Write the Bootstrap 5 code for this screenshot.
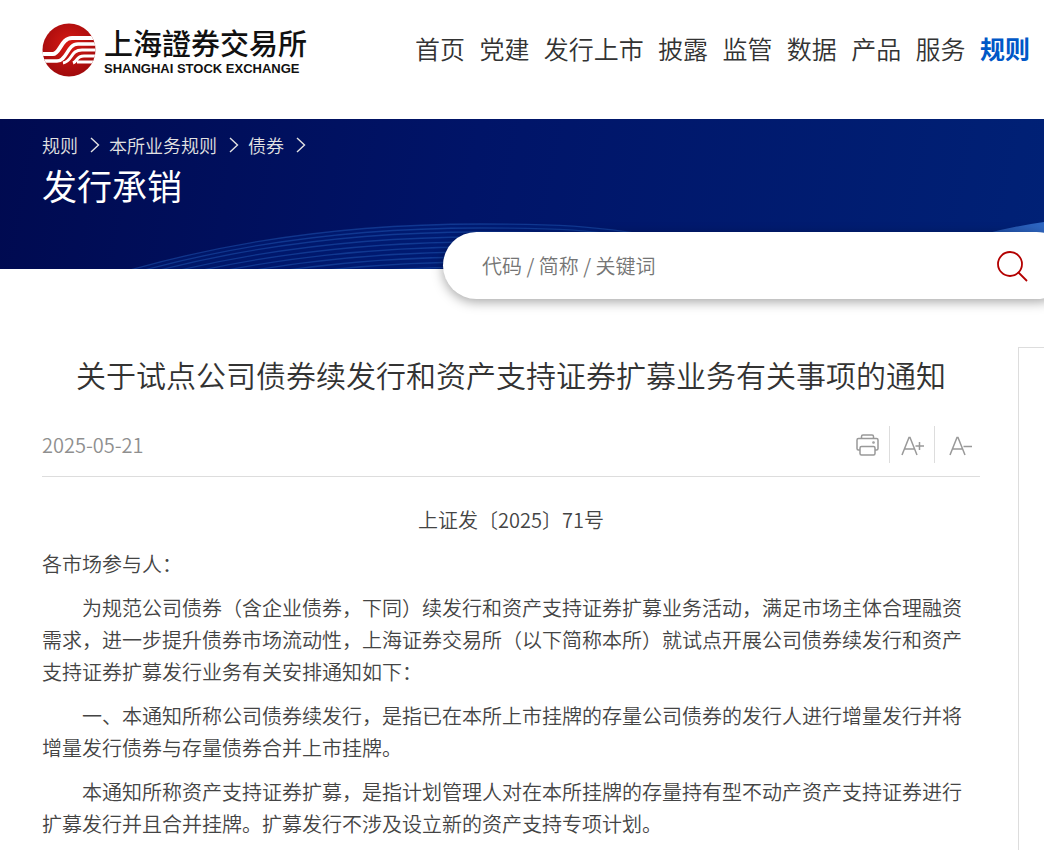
<!DOCTYPE html>
<html lang="zh-CN">
<head>
<meta charset="utf-8">
<meta name="viewport" content="width=device-width, initial-scale=1">
<title>发行承销 | 上海证券交易所</title>
<link href="https://cdn.jsdelivr.net/npm/bootstrap@5.3.0/dist/css/bootstrap.min.css" rel="stylesheet">
<style>
body{font-family:"Noto Sans CJK SC",sans-serif;font-weight:350;color:#333;background:#fff}
a{text-decoration:none;color:inherit}
.site-head{height:119px;padding:23px 14px 0 42px}
.logo-cn{font-family:"Noto Sans CJK TC",sans-serif;font-size:29px;line-height:38px;font-weight:500;color:#111}
.logo-en{font-family:"Liberation Sans",Arial,sans-serif;font-size:13px;line-height:16px;font-weight:700;color:#111}
.main-menu{font-size:25px;line-height:36px;margin:7px 0 0 108px}
.main-menu .nav-link{padding:0;color:#333;font-weight:350}
.main-menu .nav-link.active{color:#0058c7;font-weight:700}
.banner{height:150px;padding:12px 0 0 42px;background:linear-gradient(100deg,#000a50 0%,#001468 45%,#002176 100%);color:#fff}
.waves{left:0;top:0}
.crumbs{font-size:18px;line-height:28px;color:#e2e2e2}
.crumbs svg{margin:0 9px 0 12px}
.banner h1{font-size:35px;line-height:48px;font-weight:400;margin:2px 0 0}
.search-box{left:443px;right:-26px;top:113px;height:67px;padding:0 41px 0 39px;border-radius:34px;background:#fff;box-shadow:0 3px 12px rgba(0,0,0,.35)}
.search-box input{font-size:20px;color:#333;outline:0;font-weight:350}
.search-box input::placeholder{color:#757575;opacity:1}
.content-row{padding:78px 0 0 42px}
.article{flex:0 0 calc(100% - 64px)}
.article h2{font-size:30px;line-height:44px;font-weight:350;padding-top:5px;margin:0 0 30px}
.meta{height:51px;border-bottom:1px solid #ddd;color:#8f8f8f;font-size:20px}
.meta time{line-height:38px}
.tools{height:37px}
.tools button{border:0;background:none;padding:0 10px 0 11px;color:#999;line-height:1}
.tools button+button{border-left:1px solid #ddd}
.tools button:last-child{padding:0 8px 0 14px}
.body-text{padding-top:27px;font-size:20px;line-height:32px;color:#444}
.body-text p{margin:0 0 12px}
.body-text .indent{text-indent:2em}
.side{flex:0 0 300px;margin-left:38px;border:1px solid #ddd}
</style>
</head>
<body>
<div class="overflow-hidden">
<header class="site-head d-flex align-items-start">
  <a href="#" class="d-flex align-items-center flex-shrink-0" aria-label="上海證券交易所">
    <svg width="54" height="54" viewBox="0 0 54 54" class="me-2" aria-hidden="true">
      <defs>
        <radialGradient id="red" cx=".5" cy=".4" r=".6"><stop offset="0" stop-color="#d81a14"/><stop offset="1" stop-color="#a00a0c"/></radialGradient>
        <clipPath id="disc"><circle cx="27" cy="27" r="26.500"/></clipPath>
      </defs>
      <circle cx="27" cy="27" r="26.500" fill="url(#red)"/>
      <g fill="none" stroke="#fff" clip-path="url(#disc)">
        <path stroke-width="4" d="M0 31H11C18 31 19 15 30 15H54"/>
        <path stroke-width="3.500" d="M0 38H15C25 38 25 21 36 21H54"/>
        <path stroke-width="3" d="M21 40C31 38 28 27 40 27H54"/>
        <path stroke-width="3" d="M31 40C36 38 34 33 42 33H54M35 39H52"/>
      </g>
    </svg>
    <span><span class="logo-cn d-block">上海證券交易所</span><span class="logo-en d-block">SHANGHAI STOCK EXCHANGE</span></span>
  </a>
  <nav class="main-menu nav flex-nowrap flex-grow-1 justify-content-between text-nowrap">
    <a class="nav-link" href="#">首页</a>
    <a class="nav-link" href="#">党建</a>
    <a class="nav-link" href="#">发行上市</a>
    <a class="nav-link" href="#">披露</a>
    <a class="nav-link" href="#">监管</a>
    <a class="nav-link" href="#">数据</a>
    <a class="nav-link" href="#">产品</a>
    <a class="nav-link" href="#">服务</a>
    <a class="nav-link active" href="#" aria-current="page">规则</a>
  </nav>
</header>

<section class="banner position-relative">
  <svg class="waves position-absolute w-100 h-100" viewBox="0 0 1044 150" preserveAspectRatio="xMaxYMax slice" aria-hidden="true">
    <defs>
      <path id="wave" d="M130 151C250 117 370 105 480 105S600 110 660 117"/>
      <linearGradient id="glow" x1="0" x2="1"><stop offset="0" stop-color="#1c48a0"/><stop offset="1" stop-color="#2f68c4"/></linearGradient>
    </defs>
    <g fill="none" stroke="#1f57b4" stroke-opacity=".5" stroke-width="1.300">
      <path fill="#0038a0" fill-opacity=".2" stroke="none" d="M130 151C250 117 370 105 480 105S600 110 660 117V151Z"/>
      <use href="#wave"/><use href="#wave" y="4"/><use href="#wave" y="8"/><use href="#wave" y="13"/><use href="#wave" y="18"/><use href="#wave" y="23"/><use href="#wave" y="28"/><use href="#wave" y="33"/><use href="#wave" y="38"/><use href="#wave" y="43"/>
    </g>
    <path d="M980 116Q1015 107 1044 103V122H980Z" fill="url(#glow)"/>
  </svg>
  <nav class="crumbs d-flex align-items-center position-relative" aria-label="breadcrumb">
    <a href="#">规则</a><svg width="10" height="16" viewBox="0 0 10 16" fill="none" stroke="currentColor" stroke-width="1.400"><path d="M1 1L8.500 8L1 15"/></svg>
    <a href="#">本所业务规则</a><svg width="10" height="16" viewBox="0 0 10 16" fill="none" stroke="currentColor" stroke-width="1.400"><path d="M1 1L8.500 8L1 15"/></svg>
    <a href="#">债券</a><svg width="10" height="16" viewBox="0 0 10 16" fill="none" stroke="currentColor" stroke-width="1.400"><path d="M1 1L8.500 8L1 15"/></svg>
  </nav>
  <h1 class="position-relative">发行承销</h1>
  <form class="search-box position-absolute d-flex align-items-center" role="search">
    <input class="border-0 bg-transparent flex-grow-1 p-0" type="text" placeholder="代码 / 简称 / 关键词" aria-label="代码 / 简称 / 关键词">
    <button class="border-0 bg-transparent p-0 d-flex" type="button" aria-label="搜索">
      <svg width="34" height="34" viewBox="0 0 34 34" fill="none" stroke="#b30000" stroke-width="1.800"><circle cx="15" cy="15" r="12"/><path d="M23.500 23.500L32 32"/></svg>
    </button>
  </form>
</section>

<main class="content-row d-flex">
  <article class="article">
    <h2 class="text-center">关于试点公司债券续发行和资产支持证券扩募业务有关事项的通知</h2>
    <div class="meta d-flex justify-content-between align-items-start">
      <time datetime="2025-05-21">2025-05-21</time>
      <div class="tools d-flex">
        <button type="button" aria-label="打印"><svg width="23" height="22" viewBox="0 0 23 22" fill="none" stroke="currentColor" stroke-width="1.500"><path d="M5.500 4.500V2.500Q5.500 1 7 1H16Q17.500 1 17.500 2.500V4.500M4 16H2.500Q1 16 1 14.500V6Q1 4.500 2.500 4.500H20.500Q22 4.500 22 6V14.500Q22 16 20.500 16H19"/><rect x="4" y="12.500" width="15" height="8.500" rx="1.500"/><circle cx="17.500" cy="8.500" r=".6"/></svg></button>
        <button type="button" aria-label="放大字号"><svg width="23" height="20" viewBox="0 0 23 20" fill="none" stroke="currentColor" stroke-width="1.500"><path d="M1 19L8 1.500H9L16 19M3.500 13H13.500M14.500 10H23M18.500 6V14"/></svg></button>
        <button type="button" aria-label="缩小字号"><svg width="23" height="20" viewBox="0 0 23 20" fill="none" stroke="currentColor" stroke-width="1.500"><path d="M1 19L8 1.500H9L16 19M3.500 13H13.500M14.500 10.500H23"/></svg></button>
      </div>
    </div>
    <div class="body-text">
      <p class="text-center">上证发〔2025〕71号</p>
      <p>各市场参与人：</p>
      <p class="indent">为规范公司债券（含企业债券，下同）续发行和资产支持证券扩募业务活动，满足市场主体合理融资需求，进一步提升债券市场流动性，上海证券交易所（以下简称本所）就试点开展公司债券续发行和资产支持证券扩募发行业务有关安排通知如下：</p>
      <p class="indent">一、本通知所称公司债券续发行，是指已在本所上市挂牌的存量公司债券的发行人进行增量发行并将增量发行债券与存量债券合并上市挂牌。</p>
      <p class="indent">本通知所称资产支持证券扩募，是指计划管理人对在本所挂牌的存量持有型不动产资产支持证券进行扩募发行并且合并挂牌。扩募发行不涉及设立新的资产支持专项计划。</p>
    </div>
  </article>
  <aside class="side" aria-label="侧栏"></aside>
</main>
</div>
<script src="https://cdn.jsdelivr.net/npm/bootstrap@5.3.0/dist/js/bootstrap.bundle.min.js"></script>
</body>
</html>
